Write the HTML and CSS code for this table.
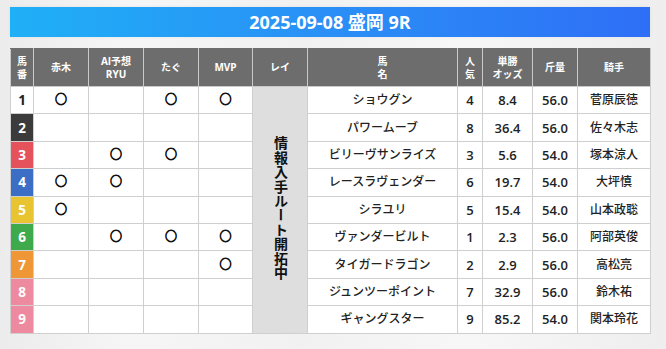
FILE: index.html
```html
<!DOCTYPE html>
<html lang="ja">
<head>
<meta charset="utf-8">
<title>2025-09-08 盛岡 9R</title>
<link rel="stylesheet" href="styles.css">
</head>
<body>
<main class="page">
  <h1 class="banner">2025-09-08 盛岡 9R</h1>
  <table class="race">
    <colgroup>
      <col class="c-num"><col class="c-mark"><col class="c-mark"><col class="c-mark"><col class="c-mark4"><col class="c-rei">
      <col class="c-name"><col class="c-pop"><col class="c-odds"><col class="c-wt"><col class="c-jockey">
    </colgroup>
    <thead>
      <tr>
        <th>馬<br>番</th><th>赤木</th><th>AI予想<br>RYU</th><th>たぐ</th><th>MVP</th><th>レイ</th>
        <th>馬<br>名</th><th>人<br>気</th><th>単勝<br>オッズ</th><th>斤量</th><th>騎手</th>
      </tr>
    </thead>
    <tbody>
      <tr>
        <td class="num n1">1</td><td class="mark">○</td><td class="mark"></td><td class="mark">○</td><td class="mark">○</td>
        <td class="rei" rowspan="9"><span class="rei-text">情報入手ルート開拓中</span></td>
        <td class="name">ショウグン</td><td class="val">4</td><td class="val">8.4</td><td class="val">56.0</td><td class="jk">菅原辰徳</td>
      </tr>
      <tr>
        <td class="num n2">2</td><td class="mark"></td><td class="mark"></td><td class="mark"></td><td class="mark"></td>
        <td class="name">パワームーブ</td><td class="val">8</td><td class="val">36.4</td><td class="val">56.0</td><td class="jk">佐々木志</td>
      </tr>
      <tr>
        <td class="num n3">3</td><td class="mark"></td><td class="mark">○</td><td class="mark">○</td><td class="mark"></td>
        <td class="name">ビリーヴサンライズ</td><td class="val">3</td><td class="val">5.6</td><td class="val">54.0</td><td class="jk">塚本涼人</td>
      </tr>
      <tr>
        <td class="num n4">4</td><td class="mark">○</td><td class="mark">○</td><td class="mark"></td><td class="mark"></td>
        <td class="name">レースラヴェンダー</td><td class="val">6</td><td class="val">19.7</td><td class="val">54.0</td><td class="jk">大坪慎</td>
      </tr>
      <tr>
        <td class="num n5">5</td><td class="mark">○</td><td class="mark"></td><td class="mark"></td><td class="mark"></td>
        <td class="name">シラユリ</td><td class="val">5</td><td class="val">15.4</td><td class="val">54.0</td><td class="jk">山本政聡</td>
      </tr>
      <tr>
        <td class="num n6">6</td><td class="mark"></td><td class="mark">○</td><td class="mark">○</td><td class="mark">○</td>
        <td class="name">ヴァンダービルト</td><td class="val">1</td><td class="val">2.3</td><td class="val">56.0</td><td class="jk">阿部英俊</td>
      </tr>
      <tr>
        <td class="num n7">7</td><td class="mark"></td><td class="mark"></td><td class="mark"></td><td class="mark">○</td>
        <td class="name">タイガードラゴン</td><td class="val">2</td><td class="val">2.9</td><td class="val">56.0</td><td class="jk">高松亮</td>
      </tr>
      <tr>
        <td class="num n8">8</td><td class="mark"></td><td class="mark"></td><td class="mark"></td><td class="mark"></td>
        <td class="name">ジュンツーポイント</td><td class="val">7</td><td class="val">32.9</td><td class="val">56.0</td><td class="jk">鈴木祐</td>
      </tr>
      <tr>
        <td class="num n9">9</td><td class="mark"></td><td class="mark"></td><td class="mark"></td><td class="mark"></td>
        <td class="name">ギャングスター</td><td class="val">9</td><td class="val">85.2</td><td class="val">54.0</td><td class="jk">関本玲花</td>
      </tr>
    </tbody>
  </table>
</main>
</body>
</html>
```

FILE: styles.css
```css
html, body {
  margin: 0;
  padding: 0;
}
body {
  width: 666px;
  height: 349px;
  overflow: hidden;
  background: linear-gradient(90deg, #ececec 0%, #f6f6f6 20%, #f1f1f1 45%, #f7f7f7 70%, #eeeeee 100%);
  font-family: "Open Sans", "Noto Sans CJK JP", sans-serif;
  color: #222;
}
.page {
  display: flex;
  flex-direction: column;
  gap: 11px;
  padding: 7px 16px 0 10px;
}
.banner {
  margin: 0;
  height: 30px;
  line-height: 30px;
  text-align: center;
  color: #fff;
  font-size: 18px;
  font-weight: 700;
  background: linear-gradient(90deg, #1fb0f6 0%, #2a8ff6 50%, #2e6ff6 100%);
  box-shadow: 0 0 4px rgba(0,0,0,0.06);
}
.race {
  width: 640px;
  border-collapse: collapse;
  table-layout: fixed;
  background: #fff;
}
.c-num { width: 23px; }
.c-mark { width: 55px; }
.c-mark4 { width: 54px; }
.c-rei { width: 55px; }
.c-name { width: 150px; }
.c-pop { width: 25px; }
.c-odds { width: 50px; }
.c-wt { width: 45px; }
.c-jockey { width: 73px; }

.race th {
  height: 37px;
  padding: 0;
  background: #6d6d6d;
  color: #fff;
  font-size: 10px;
  line-height: 13px;
  font-weight: 700;
  border: 1px solid #c9c9c9;
  border-top-color: #6d6d6d;
  text-align: center;
}
.race td {
  height: 26.4px;
  padding: 0;
  border: 1px solid #cfcfcf;
  text-align: center;
  font-size: 13px;
  font-weight: 600;
  line-height: 16px;
}
.race td.num {
  color: #fff;
  font-weight: 700;
  font-size: 13.5px;
}
.race td.n1 { background: #fff; color: #222; }
.n2 { background: #3b3b3b; }
.n3 { background: #e5525b; }
.n4 { background: #3d6ec6; }
.n5 { background: #e8c530; }
.n6 { background: #3eaa4c; }
.n7 { background: #ef9637; }
.n8 { background: #ee8aa0; }
.n9 { background: #ee8aa0; }

.race td.mark {
  font-size: 12px;
  font-weight: 700;
  color: #111;
  -webkit-text-stroke: 0.8px #111;
}
.race td.rei {
  background: #dedede;
  vertical-align: middle;
}
.rei-text {
  writing-mode: vertical-rl;
  font-size: 14px;
  font-weight: 700;
  line-height: 14px;
  letter-spacing: 0.4px;
  color: #111;
}
.race td.name {
  font-size: 12px;
  font-weight: 500;
}
.race td.jk {
  font-size: 12px;
  font-weight: 500;
}
.race td.val {
  font-size: 13px;
  font-weight: 600;
}
```
